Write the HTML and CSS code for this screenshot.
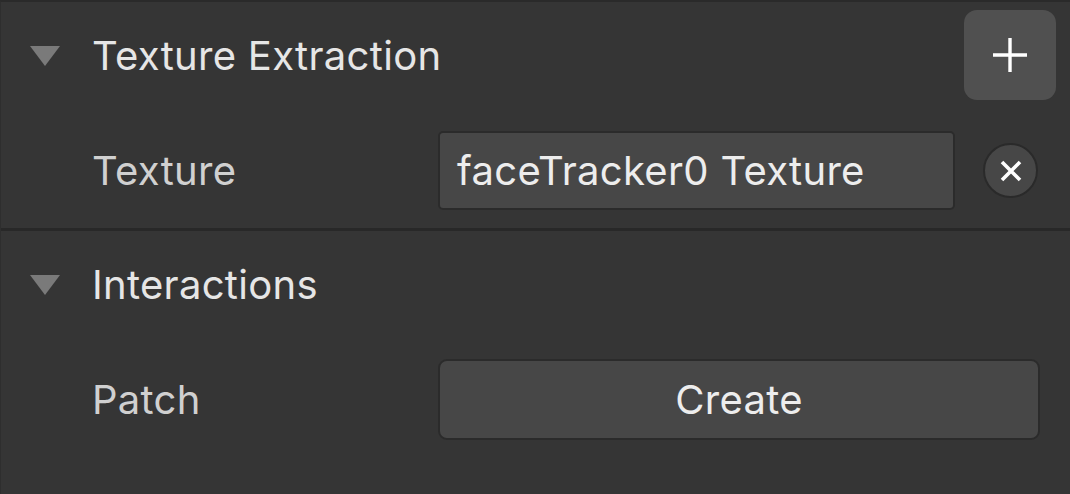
FILE: index.html
```html
<!DOCTYPE html>
<html>
<head>
<meta charset="utf-8">
<link rel="stylesheet" href="styles.css">
</head>
<body>
<div class="panel">
  <section class="section">
    <div class="header">
      <span class="caret"></span>
      <span class="title">Texture Extraction</span>
      <button class="add-btn" aria-label="Add">
        <svg width="34" height="34" viewBox="0 0 34 34"><path d="M17 0V34M0 17H34" stroke="#fff" stroke-width="3.4" fill="none"/></svg>
      </button>
    </div>
    <div class="field">
      <span class="label">Texture</span>
      <div class="input">faceTracker0 Texture</div>
      <button class="clear-btn" aria-label="Clear">
        <svg width="22" height="22" viewBox="0 0 22 22"><path d="M2 2L20 20M20 2L2 20" stroke="#fff" stroke-width="3.6" fill="none"/></svg>
      </button>
    </div>
  </section>
  <div class="divider"></div>
  <section class="section">
    <div class="header">
      <span class="caret"></span>
      <span class="title">Interactions</span>
    </div>
    <div class="field">
      <span class="label">Patch</span>
      <button class="create-btn">Create</button>
    </div>
  </section>
</div>
</body>
</html>
```

FILE: styles.css
```css
* { box-sizing: border-box; }
html, body {
  margin: 0;
  padding: 0;
  background: #353535;
}
body {
  width: 1070px;
  height: 494px;
  overflow: hidden;
  font-family: Inter, "Noto Sans", sans-serif;
  letter-spacing: 0.3px;
}
.panel {
  height: 494px;
  border-top: 2px solid #2a2a2a;
  border-left: 1px solid #2e2e2e;
  display: flex;
  flex-direction: column;
}
.section {
  padding: 8px 30px 18px 29px;
  display: flex;
  flex-direction: column;
}
.header {
  height: 90px;
  display: flex;
  align-items: center;
}
.caret {
  width: 0;
  height: 0;
  border-left: 15.5px solid transparent;
  border-right: 15.5px solid transparent;
  border-top: 20px solid #7a7a7a;
  margin-top: 2px;
  margin-right: 32px;
  flex: none;
}
.title {
  font-size: 40px;
  color: #e6e6e6;
  flex: 1;
}
.add-btn {
  width: 92px;
  height: 90px;
  margin-right: -16px;
  border: none;
  border-radius: 13px;
  background: #505050;
  display: flex;
  align-items: center;
  justify-content: center;
  padding: 0;
}
.field {
  margin-top: 31px;
  height: 79px;
  display: flex;
  align-items: center;
  padding-left: 62px;
}
.label {
  width: 346px;
  font-size: 40px;
  color: #d0d0d0;
  flex: none;
}
.input {
  width: 517px;
  height: 79px;
  background: #474747;
  border: 2px solid #2b2b2b;
  border-radius: 5px;
  font-size: 40px;
  color: #ededed;
  display: flex;
  align-items: center;
  padding-left: 17px;
}
.clear-btn {
  width: 55px;
  height: 55px;
  margin-left: 28px;
  border-radius: 50%;
  border: 2px solid #2a2a2a;
  background: #474747;
  display: flex;
  align-items: center;
  justify-content: center;
  padding: 0;
}
.divider {
  height: 3px;
  background: #282828;
  flex: none;
}
.section + .divider + .section .field {
  margin-top: 30px;
  height: 81px;
}
.create-btn {
  flex: 1;
  height: 81px;
  background: #474747;
  border: 2px solid #2b2b2b;
  border-radius: 9px;
  font-family: Inter, "Noto Sans", sans-serif;
  font-size: 40px;
  letter-spacing: 0.3px;
  color: #ededed;
  padding: 0;
}
```
